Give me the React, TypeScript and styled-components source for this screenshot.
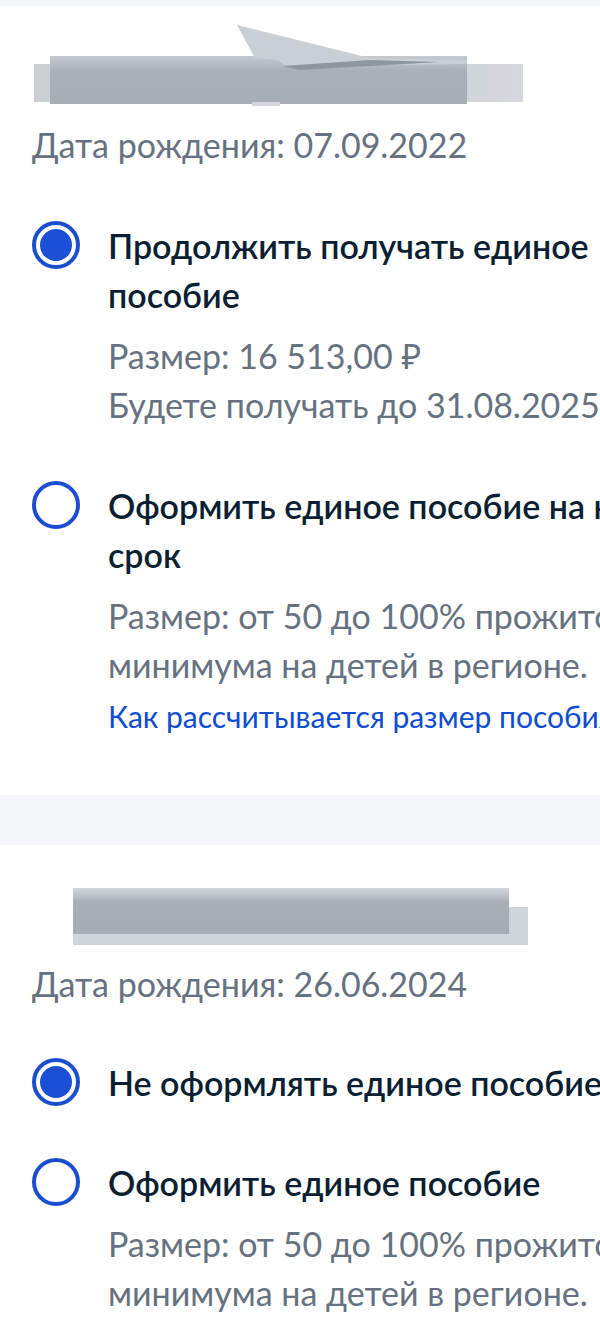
import React from "react";
import styled, { createGlobalStyle } from "styled-components";

const Global = createGlobalStyle`
  html, body { margin: 0; padding: 0; background: #ffffff; overflow-x: hidden; }
  body { font-family: Lato, "Noto Sans", sans-serif; -webkit-font-smoothing: antialiased; }
  * { box-sizing: border-box; }
`;

const Page = styled.div`
  width: 600px;
  overflow: hidden;
  display: flex;
  flex-direction: column;
`;

const Band = styled.div<{ $h: number }>`
  height: ${(p) => p.$h}px;
  background: #f4f6fa;
  flex: none;
`;

const Card = styled.section<{ $pt: number; $pb: number }>`
  display: flex;
  flex-direction: column;
  padding: ${(p) => p.$pt}px 0 ${(p) => p.$pb}px 32px;
  background: #ffffff;
`;

const RedactionBox = styled.div<{ $h: number; $mb: number }>`
  height: ${(p) => p.$h}px;
  margin-bottom: ${(p) => p.$mb}px;
  margin-left: -32px;
  width: 600px;
  flex: none;
`;

const BirthDate = styled.div`
  font-size: 34px;
  line-height: 49px;
  color: #66727f;
  white-space: nowrap;
`;

const Options = styled.div<{ $mt: number; $gap: number }>`
  display: flex;
  flex-direction: column;
  gap: ${(p) => p.$gap}px;
  margin-top: ${(p) => p.$mt}px;
`;

const Option = styled.div`
  display: flex;
  align-items: flex-start;
  gap: 28px;
`;

const Radio = styled.div<{ $checked?: boolean }>`
  flex: none;
  width: 48px;
  height: 48px;
  border-radius: 50%;
  border: 4px solid #1a4ecf;
  display: flex;
  align-items: center;
  justify-content: center;
  &::after {
    content: "";
    width: 32px;
    height: 32px;
    border-radius: 50%;
    background: ${(p) => (p.$checked ? "#1a4fd6" : "transparent")};
  }
`;

const OptionBody = styled.div`
  flex: none;
  display: flex;
  flex-direction: column;
`;

const Title = styled.div`
  width: 595px;
  font-size: 34px;
  line-height: 49px;
  font-weight: 600;
  color: #0b1f33;
`;

const Details = styled.div`
  width: 640px;
  margin-top: 12px;
  display: flex;
  flex-direction: column;
`;

const Detail = styled.div`
  font-size: 34px;
  line-height: 49px;
  color: #66727f;
`;

const Link = styled.a`
  font-size: 30px;
  line-height: 40px;
  color: #0d4cd3;
  text-decoration: none;
  white-space: nowrap;
  margin-top: 7px;
`;

const RedactionA = () => (
  <svg width="600" height="86" viewBox="0 0 600 86">
    <defs>
      <linearGradient id="ra1" x1="0" x2="1" y1="0" y2="0">
        <stop offset="0" stopColor="#cbd0d5" />
        <stop offset="0.5" stopColor="#c6ccd1" />
        <stop offset="1" stopColor="#d5d9dd" />
      </linearGradient>
      <linearGradient id="ra2" x1="0" x2="0" y1="0" y2="1">
        <stop offset="0" stopColor="#c4cacf" />
        <stop offset="0.3" stopColor="#a9b1b8" />
        <stop offset="1" stopColor="#a7afb6" />
      </linearGradient>
    </defs>
    <rect x="34" y="44" width="489" height="38" fill="url(#ra1)" />
    <rect x="50" y="36" width="417" height="48" fill="url(#ra2)" />
    <polygon points="237,5 370,38 467,40 467,44 285,46 278,40 255,38" fill="#c9cfd4" />
    <polygon points="282,46 370,40 440,42 300,50" fill="#8e979f" />
    <rect x="252" y="82" width="28" height="4" fill="#d3d7db" />
  </svg>
);

const RedactionB = () => (
  <svg width="600" height="70" viewBox="0 0 600 70">
    <defs>
      <linearGradient id="rb1" x1="0" x2="0" y1="0" y2="1">
        <stop offset="0" stopColor="#d2d6da" />
        <stop offset="0.3" stopColor="#a8b0b7" />
        <stop offset="1" stopColor="#a6aeb5" />
      </linearGradient>
    </defs>
    <rect x="73" y="22" width="455" height="38" fill="#d0d5d9" />
    <rect x="73" y="3" width="436" height="46" fill="url(#rb1)" />
  </svg>
);

export default function App() {
  return (
    <Page>
      <Global />
      <Band $h={6} />
      <Card $pt={14} $pb={59}>
        <RedactionBox $h={86} $mb={14}>
          <RedactionA />
        </RedactionBox>
        <BirthDate>Дата рождения: 07.09.2022</BirthDate>
        <Options $mt={52} $gap={52}>
          <Option>
            <Radio $checked />
            <OptionBody>
              <Title>Продолжить получать единое пособие</Title>
              <Details>
                <Detail>Размер: 16 513,00 ₽</Detail>
                <Detail>Будете получать до 31.08.2025</Detail>
              </Details>
            </OptionBody>
          </Option>
          <Option>
            <Radio />
            <OptionBody>
              <Title>Оформить единое пособие на новый срок</Title>
              <Details>
                <Detail>Размер: от 50 до 100% прожиточного минимума на детей в регионе.</Detail>
                <Link href="#">Как рассчитывается размер пособия</Link>
              </Details>
            </OptionBody>
          </Option>
        </Options>
      </Card>
      <Band $h={50} />
      <Card $pt={40} $pb={40}>
        <RedactionBox $h={70} $mb={4}>
          <RedactionB />
        </RedactionBox>
        <BirthDate>Дата рождения: 26.06.2024</BirthDate>
        <Options $mt={50} $gap={51}>
          <Option>
            <Radio $checked />
            <OptionBody>
              <Title>Не оформлять единое пособие</Title>
            </OptionBody>
          </Option>
          <Option>
            <Radio />
            <OptionBody>
              <Title>Оформить единое пособие</Title>
              <Details>
                <Detail>Размер: от 50 до 100% прожиточного минимума на детей в регионе.</Detail>
              </Details>
            </OptionBody>
          </Option>
        </Options>
      </Card>
    </Page>
  );
}
